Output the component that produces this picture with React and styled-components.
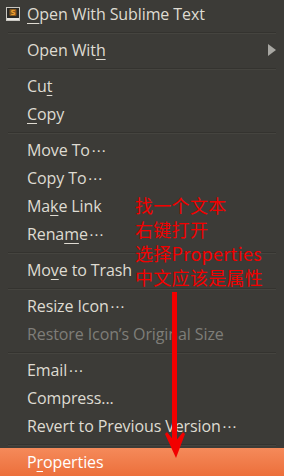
import React from 'react';
import styled, { createGlobalStyle } from 'styled-components';

const GlobalStyle = createGlobalStyle`
  html, body {
    margin: 0;
    padding: 0;
    background: #3c3b37;
  }
`;

const items = [
  { type: 'item', label: 'Open With Sublime Text', mn: 0, icon: true },
  { type: 'sep' },
  { type: 'item', label: 'Open With', mn: 8, submenu: true },
  { type: 'sep' },
  { type: 'item', label: 'Cut', mn: 2 },
  { type: 'item', label: 'Copy', mn: 0 },
  { type: 'sep' },
  { type: 'item', label: 'Move To', dots: true },
  { type: 'item', label: 'Copy To', dots: true },
  { type: 'item', label: 'Make Link', mn: 2 },
  { type: 'item', label: 'Rename', mn: 4, dots: true },
  { type: 'sep' },
  { type: 'item', label: 'Move to Trash', mn: 2 },
  { type: 'sep' },
  { type: 'item', label: 'Resize Icon', dots: true },
  { type: 'item', label: 'Restore Icon\u2019s Original Size', disabled: true },
  { type: 'sep' },
  { type: 'item', label: 'Email', dots: true },
  { type: 'item', label: 'Compress...' },
  { type: 'item', label: 'Revert to Previous Version', dots: true },
  { type: 'sep' },
  { type: 'item', label: 'Properties', mn: 1, active: true },
];

const Menu = styled.div`
  position: relative;
  width: 284px;
  height: 476px;
  overflow: hidden;
  background: #3c3b37;
  font-family: 'Open Sans', 'DejaVu Sans', sans-serif;
  font-size: 16px;
  letter-spacing: -0.1px;
  color: #dfdbd2;
`;

const Row = styled.div`
  height: 28px;
  display: flex;
  align-items: center;
  padding-left: 27px;
  position: relative;
  color: ${p => (p.disabled ? '#7f7e79' : p.active ? '#ffffff' : '#dfdbd2')};
  background: ${p => (p.active ? 'linear-gradient(#f58a5a, #ec6f3b)' : 'transparent')};
  white-space: nowrap;
`;

const Separator = styled.div`
  height: 8px;
  display: flex;
  align-items: center;
  padding: 0 8px;
  &::after {
    content: '';
    flex: 1;
    height: 1px;
    background: #34332f;
    box-shadow: 0 1px 0 #45443f;
  }
`;

const Mnemonic = styled.span`
  text-decoration: underline;
  text-underline-offset: 3px;
  text-decoration-thickness: 1px;
`;

const Dots = styled.span`
  letter-spacing: 0;
  margin-left: 1px;
  font-size: 15px;
`;

const IconBox = styled.svg`
  position: absolute;
  left: 6px;
  top: 7px;
`;

const SubArrow = styled.svg`
  position: absolute;
  right: 8px;
  top: 8px;
`;

const Note = styled.div`
  position: absolute;
  left: 135px;
  top: 193px;
  color: #f20000;
  font-family: 'Noto Sans CJK SC', 'DejaVu Sans', sans-serif;
  font-size: 18px;
  line-height: 24px;
  letter-spacing: 0.3px;
`;

const Arrow = styled.svg`
  position: absolute;
  left: 160px;
  top: 292px;
`;

function Label({ text, mn, dots }) {
  const tail = dots ? <Dots>{'\u22ef'}</Dots> : null;
  if (mn === undefined) return <span>{text}{tail}</span>;
  return (
    <span>
      {text.slice(0, mn)}
      <Mnemonic>{text[mn]}</Mnemonic>
      {text.slice(mn + 1)}
      {tail}
    </span>
  );
}

export default function App() {
  return (
    <>
      <GlobalStyle />
      <Menu>
        {items.map((it, i) =>
          it.type === 'sep' ? (
            <Separator key={i} />
          ) : (
            <Row key={i} disabled={it.disabled} active={it.active}>
              {it.icon && (
                <IconBox width="14" height="14" viewBox="0 0 14 14">
                  <rect x="0.5" y="0.5" width="13" height="13" fill="#2a2926" stroke="#c9c7c1" />
                  <rect x="1" y="11" width="12" height="2" fill="#e8e6e0" />
                  <rect x="3.5" y="2" width="7" height="7" rx="1" fill="#8a5a1e" />
                  <text x="7" y="8" fontSize="7" fontFamily="DejaVu Sans" fontWeight="bold" fill="#f0a030" textAnchor="middle">S</text>
                </IconBox>
              )}
              <Label text={it.label} mn={it.mn} dots={it.dots} />
              {it.submenu && (
                <SubArrow width="8" height="12" viewBox="0 0 8 12">
                  <path d="M0 0 L8 6 L0 12 Z" fill="#a8a7a2" />
                </SubArrow>
              )}
            </Row>
          )
        )}
        <Note>
          <div>找一个文本</div>
          <div>右键打开</div>
          <div>选择Properties</div>
          <div>中文应该是属性</div>
        </Note>
        <Arrow width="30" height="170" viewBox="0 0 30 170">
          <rect x="12" y="0" width="5" height="150" fill="#f20000" />
          <path d="M7 140 L15 150 L23 140 L25 142 L16 166 L5 142 Z" fill="#f20000" />
        </Arrow>
      </Menu>
    </>
  );
}
